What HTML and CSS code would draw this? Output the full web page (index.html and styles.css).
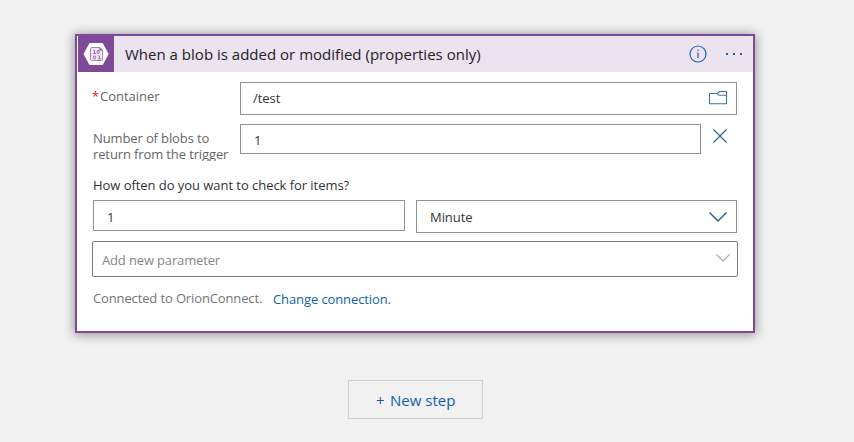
FILE: index.html
```html
<!DOCTYPE html>
<html lang="en">
<head>
<meta charset="utf-8">
<title>Logic app designer</title>
<link rel="stylesheet" href="styles.css">
</head>
<body>
<main class="designer">
  <section class="card">
    <header class="card-header">
      <div class="connector-icon">
        <svg width="36" height="36" viewBox="0 0 36 36">
          <path d="M11.5 7h13.2l6 11-6 11H11.5l-6-11z" fill="#fff"/>
          <path d="M13.500 11.500h8.500l2.500 2.700v9q0 1.300-1.300 1.300h-9.400q-1.300 0-1.300-1.300V12.800q0-1.300 1-1.300z" fill="#f1e8f5" stroke="#a781b8"/>
          <path d="M21.500 11.500v3h3z" fill="#804998"/>
          <path d="M15.300 14.200h1.200v3.300m-1.300 0h2.600M20.300 19.900h1.200V23m-1.300 0h2.600" fill="none" stroke="#915fa6" stroke-width=".9"/>
          <ellipse cx="20.200" cy="15.900" rx="1.100" ry="1.600" fill="none" stroke="#915fa6" stroke-width=".9"/>
          <ellipse cx="16.600" cy="21.400" rx="1.100" ry="1.600" fill="none" stroke="#915fa6" stroke-width=".9"/>
        </svg>
      </div>
      <h1 class="card-title">When a blob is added or modified (properties only)</h1>
      <svg class="info-icon" width="18" height="18" viewBox="0 0 18 18">
        <circle cx="9" cy="9" r="8" fill="none" stroke="#2268b5" stroke-width="1.2"/>
        <path d="M9 7.500v5.500M9 4.700v1.400" stroke="#2268b5" stroke-width="1.300"/>
      </svg>
      <svg class="more-icon" width="18" height="4" viewBox="0 0 18 4">
        <path d="M1 1h2v2H1zM8 1h2v2H8zM15 1h2v2h-2z" fill="#1c60b0"/>
      </svg>
    </header>
    <div class="card-body">
      <div class="row container-row">
        <label class="label"><span class="required">*</span><span class="container-label">Container</span></label>
        <div class="field container-field">
          <span class="path-value">/test</span>
          <svg class="folder-icon" width="20" height="16" viewBox="0 0 20 16">
            <path d="M1.500 3.500h8l2-2h7v12.300h-17zM9.500 3.500q.2 1.700 2 1.700h7" fill="none" stroke="#3c7598" stroke-width="1.1" stroke-linejoin="round"/>
          </svg>
        </div>
      </div>
      <div class="row count-row">
        <label class="label count-label">Number of blobs to<br>return from the trigger</label>
        <div class="field count-field">1</div>
        <svg class="close-icon" width="16" height="16" viewBox="0 0 16 16">
          <path d="M1.5 1.5l13 13M14.5 1.5l-13 13" stroke="#2c6084" stroke-width="1.15"/>
        </svg>
      </div>
      <div class="question">How often do you want to check for items?</div>
      <div class="row interval-row">
        <div class="field interval-field">1</div>
        <div class="field unit-field">
          <span class="unit-value">Minute</span>
          <svg class="unit-chevron" width="20" height="12" viewBox="0 0 20 12">
            <path d="M1.5 1.5L10 10l8.500-8.500" fill="none" stroke="#2c6692" stroke-width="1.5"/>
          </svg>
        </div>
      </div>
      <div class="field param-field">
        <span class="param-value">Add new parameter</span>
        <svg class="param-chevron" width="16" height="10" viewBox="0 0 16 10">
          <path d="M1.300 1.300L8 8l6.700-6.700" fill="none" stroke="#a0a0a0" stroke-width="1.1"/>
        </svg>
      </div>
      <footer class="connection">
        <span class="connected">Connected to OrionConnect.</span>
        <a class="change">Change connection.</a>
      </footer>
    </div>
  </section>
  <button class="new-step"><span class="plus">+</span><span class="step-text">New step</span></button>
</main>
</body>
</html>
```

FILE: styles.css
```css
* { box-sizing: border-box; }

body {
  margin: 0;
  background: #f1f1f1;
  font-family: "Open Sans", "Noto Sans", sans-serif;
  font-size: 13px;
  letter-spacing: -.05px;
  color: #333;
}

.designer {
  height: 442px;
  padding: 34px 0 0 75px;
  overflow: hidden;
}

.card {
  width: 680px;
  height: 299px;
  border: 2px solid #804998;
  background: #fff;
  box-shadow: 0 1px 10px 1px rgba(0, 0, 0, .38);
}

.card-header {
  display: flex;
  align-items: center;
  height: 36px;
  padding-right: 10px;
  border-left: 1px solid #fff;
  background: #ece3f0;
}

.connector-icon {
  width: 36px;
  height: 36px;
  background: #804998;
}

.card-title {
  flex: 1;
  margin: 0 0 0 11px;
  font-size: 15px;
  font-weight: 400;
  line-height: 36px;
  letter-spacing: .01px;
  white-space: nowrap;
  color: #222;
}

.info-icon { margin-right: 18px; }

.card-body { padding: 10px 15px 0 16px; }

.row { display: flex; align-items: flex-start; }

.label {
  width: 147px;
  flex: none;
  color: #666;
  line-height: 16px;
  letter-spacing: -.12px;
  white-space: nowrap;
}

.container-row { height: 42px; }
.container-row .label { padding-top: 6px; }
.required { margin: 0 1px 0 -1px; color: #e81123; }
.container-label { letter-spacing: -.03px; }

.field {
  display: flex;
  align-items: center;
  border: 1px solid #919191;
  background: #fff;
  color: #333;
}

.container-field {
  width: 497px;
  height: 33px;
  justify-content: space-between;
  padding: 0 8px 0 12px;
}
.path-value { margin-bottom: 2px; }
.folder-icon { margin-bottom: 1px; }

.count-row { height: 50px; }
.count-label { height: 37px; padding-top: 6px; overflow: hidden; }
.count-field { width: 461px; height: 30px; padding: 2px 0 0 13px; }
.close-icon { margin: 4px 0 0 11px; }

.question { height: 26px; line-height: 22px; }

.interval-row { height: 41px; gap: 11px; }
.interval-field { width: 312px; height: 31px; padding: 2px 0 0 13px; }
.unit-field {
  width: 321px;
  height: 33px;
  padding: 0 8px 0 13px;
  justify-content: space-between;
}
.unit-chevron { margin-top: 1px; }

.param-field {
  width: 646px;
  height: 36px;
  margin-left: -1px;
  padding: 0 6px 0 9px;
  justify-content: space-between;
  border-color: #7b7b7b;
  border-radius: 2px;
  color: #858585;
  letter-spacing: -.15px;
}
.param-value { margin-top: 2px; }
.param-chevron { margin-bottom: 2px; }

.connection {
  display: flex;
  padding-top: 10px;
  line-height: 22px;
  color: #757575;
}
.connected { width: 180px; letter-spacing: -.13px; }
.change { padding-top: 1px; color: #0f5fae; letter-spacing: -.1px; }

.new-step {
  display: flex;
  align-items: center;
  width: 135px;
  height: 39px;
  margin: 47px 0 0 273px;
  padding: 0 0 0 27px;
  border: 1px solid #cfcfcf;
  background: #f1f1f1;
  color: #0f60b0;
  font: 15px "Open Sans", sans-serif;
}
.plus { width: 14px; text-align: left; }
```
